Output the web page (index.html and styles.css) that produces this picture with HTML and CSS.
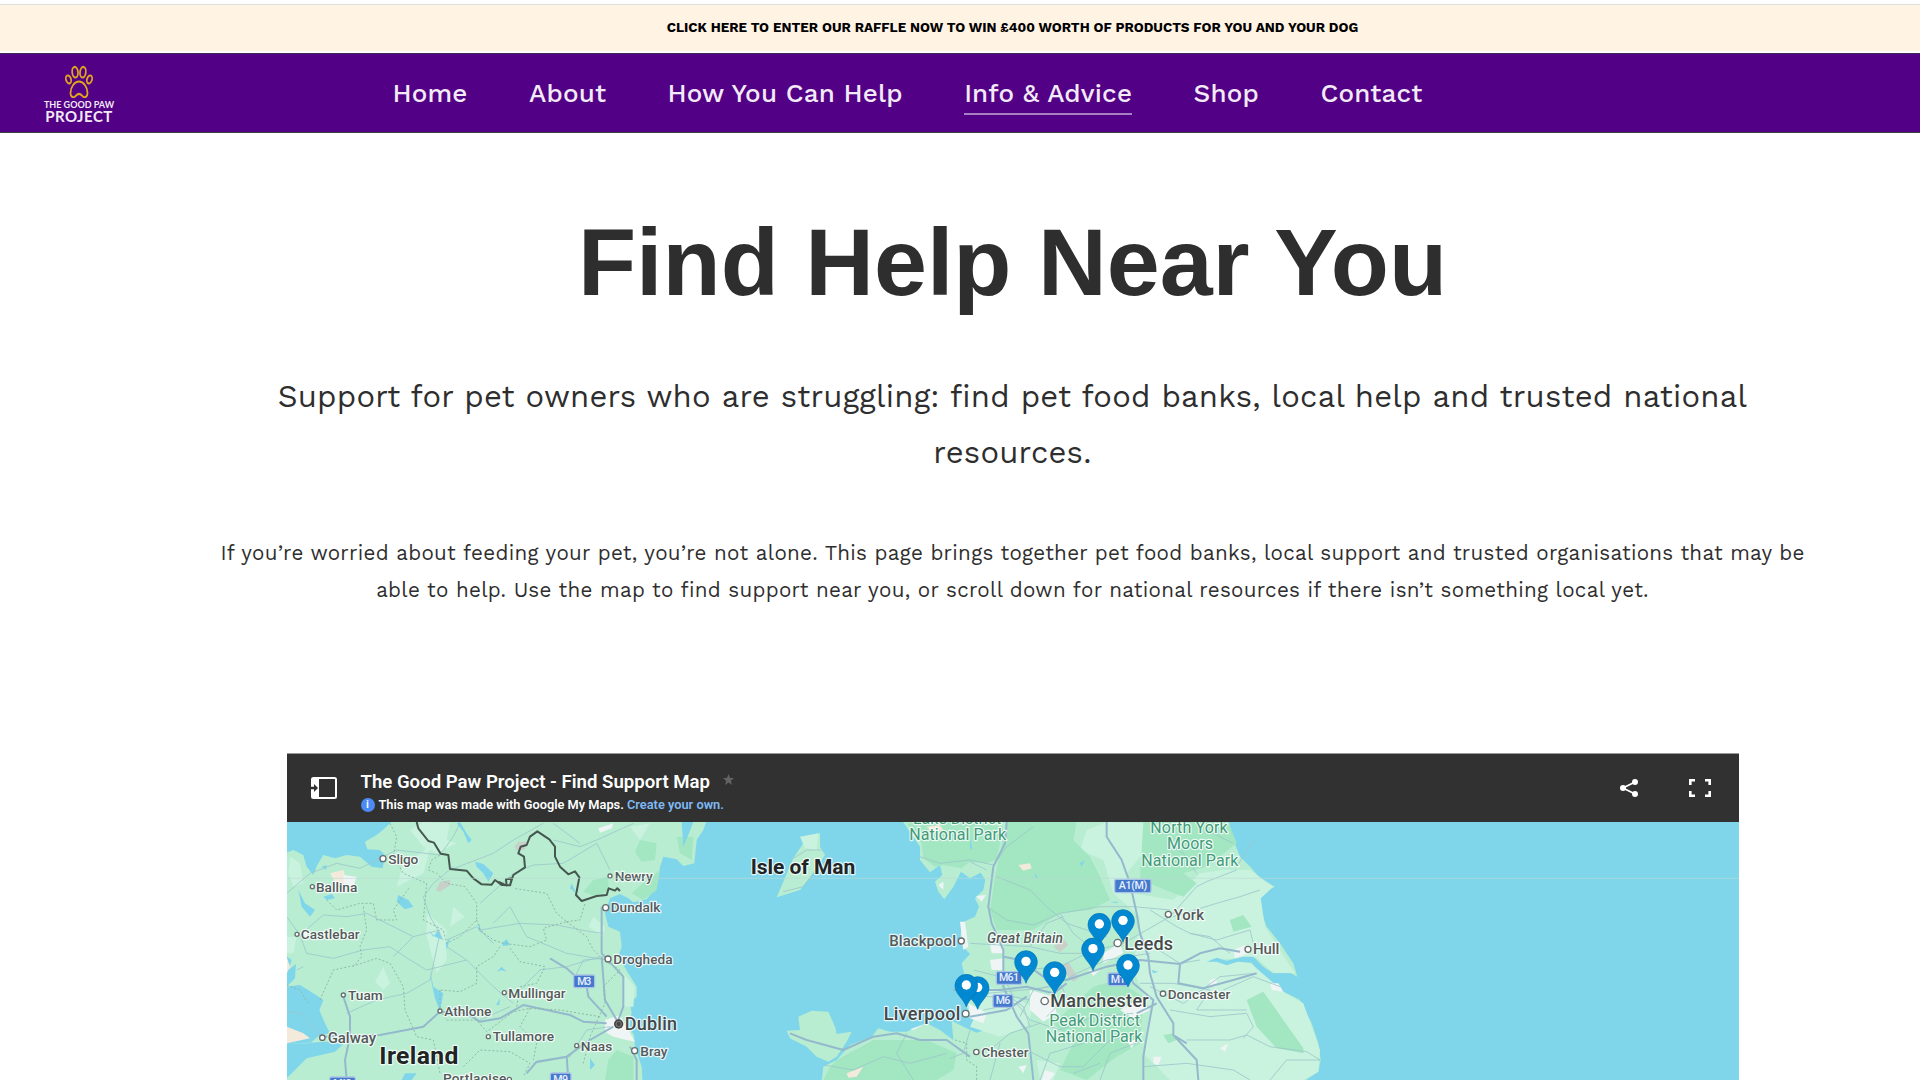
FILE: index.html
```
<!DOCTYPE html>
<html lang="en">
<head>
    <meta charset="UTF-8">
    <meta name="viewport" content="width=device-width, initial-scale=1.0">
    <title>Find Help Near You - The Good Paw Project</title>
    <link rel="stylesheet" href="styles.css">
</head>
<body>
    <div class="page">
        <a class="announcement">CLICK HERE TO ENTER OUR RAFFLE NOW TO WIN £400 WORTH OF PRODUCTS FOR YOU AND YOUR DOG</a>

        <header class="site-header">
            <a class="logo">
                <svg class="paw" viewBox="0 0 32 32" preserveAspectRatio="none">
                    <ellipse cx="11.5" cy="7" rx="3.3" ry="5.2" transform="rotate(-8 11.5 7)"/>
                    <ellipse cx="20.5" cy="7" rx="3.3" ry="5.2" transform="rotate(8 20.5 7)"/>
                    <ellipse cx="4" cy="14" rx="2.8" ry="4" transform="rotate(-24 4 14)"/>
                    <ellipse cx="28" cy="14" rx="2.8" ry="4" transform="rotate(24 28 14)"/>
                    <path d="M16 16C11 16 6.5 21 6.3 27C6 31 9.500 32 11.500 30.500C14 28.500 14.500 28 16 28C17.500 28 18 28.500 20.500 30.500C22.500 32 26 31 25.700 27C25.500 21 21 16 16 16Z"/>
                </svg>
                <span class="logo-top">THE GOOD PAW</span>
                <span class="logo-bottom">PROJECT</span>
            </a>
            <nav class="main-nav">
                <a>Home</a>
                <a>About</a>
                <a>How You Can Help</a>
                <a class="active">Info &amp; Advice</a>
                <a>Shop</a>
                <a>Contact</a>
            </nav>
        </header>

        <main>
            <h1>Find Help Near You</h1>
            <p class="lead">Support for pet owners who are struggling: find pet food banks, local help and trusted national<br>resources.</p>
            <p class="intro">If you’re worried about feeding your pet, you’re not alone. This page brings together pet food banks, local support and trusted organisations that may be<br>able to help. Use the map to find support near you, or scroll down for national resources if there isn’t something local yet.</p>

            <section class="map">
                <div class="map-header">
                    <svg class="panel-icon" viewBox="0 0 26 22">
                        <rect x="1" y="1" width="24" height="20" rx="1.500" fill="none" stroke="#fff" stroke-width="2"/>
                        <path d="M1 1H8V21H1Z" fill="#fff"/>
                        <path d="M0 9.800H3V7L7 11L3 15V12.200H0Z" fill="#303130"/>
                    </svg>
                    <div class="map-titles">
                        <div class="map-title">The Good Paw Project - Find Support Map <svg class="star" viewBox="0 0 12 12"><path d="M6 0L7.600 4.200L12 4.500L8.600 7.300L9.700 12L6 9.400L2.300 12L3.400 7.300L0 4.500L4.400 4.200Z"/></svg></div>
                        <div class="map-note"><span class="info">i</span><span>This map was made with Google My Maps. <a>Create your own.</a></span></div>
                    </div>
                    <svg class="share-icon" viewBox="0 0 18 18" fill="#fff">
                        <path d="M15 3L3 9L15 15" fill="none" stroke="#fff" stroke-width="1.800"/>
                        <circle cx="3" cy="9" r="3"/><circle cx="15" cy="3" r="3"/><circle cx="15" cy="15" r="3"/>
                    </svg>
                    <svg class="full-icon" viewBox="0 0 22 18" fill="none" stroke="#fff" stroke-width="2.600">
                        <path d="M1.300 6V1.300H6M16 1.300H20.700V6M20.700 12V16.700H16M6 16.700H1.300V12"/>
                    </svg>
                </div>

                <svg class="map-canvas" viewBox="287 822 1452 258">
                    <defs>
                        <path id="pin" d="M0 0C-7 -25 -34 -38 -34 -64A34 34 0 0 1 34 -64C34 -38 7 -25 0 0Z"/>
                    </defs>

                    <!-- Ireland -->
                    <g transform="translate(280 740) scale(.33333)">
                        <path class="land" d="M340 240L318 262L290 285L255 305L262 328L300 330L315 345L308 385L275 380L240 350L200 345L165 355L130 345L112 375L100 405L80 380L70 345L40 330L15 340V645L35 660L25 690L48 672L45 715L20 740L60 735L100 760L130 780L118 810L135 850L150 880L120 885L90 910L21 912L140 905L190 912L165 935L80 955L50 985L15 1020V1030H1088L1085 980L1065 920L1062 885L1045 860L1055 820L1050 790L1070 770L1070 740L1045 700L1015 650L1025 620L1020 575L985 560L975 520L990 475L1020 462L1045 475L1060 487L1100 478L1130 440L1140 380L1150 350L1190 358L1210 378L1243 370L1250 300L1270 270L1280 240Z"/>
                        <path class="light" d="M430 246L510 250L500 300L530 310L470 340L430 320L390 270ZM460 290L430 400L350 440L370 370L430 335ZM310 680L330 730L310 750L285 725ZM440 520L500 570L500 660L470 700L440 590ZM520 500L555 530L510 560ZM1050 260L1110 250L1080 300ZM940 530L975 560L970 590L925 560ZM1030 700L1065 740L1060 800L1030 800ZM30 350L60 370L70 430L40 440L25 400ZM20 590L50 590L40 640H20Z"/>
                        <path class="park" d="M1080 300L1130 310L1125 360L1085 365L1065 335ZM1190 290L1240 290L1235 360L1200 340ZM940 420L985 410L985 450L950 470L910 455ZM1100 420L1140 390L1130 450L1090 480L1055 460ZM1010 930L1060 950L1060 1020H975L985 960Z"/>
                        <path class="sand" d="M150 400L190 390L200 425L170 435ZM20 860L70 880L90 895L20 910ZM20 650L30 680L20 700Z"/>
                        <path class="town" d="M190 405L230 410L220 440L190 430ZM975 840L1020 825L1045 870L1065 905L1040 900L1000 890L975 875ZM955 265L1000 250L995 265L960 278ZM60 585L85 560L80 590Z"/>
                        <path class="grey" d="M468 450L480 425L510 420L512 435L480 455ZM702 320L715 305L740 305L735 330H710Z"/>
                        <path class="lake" d="M540 246L560 280L575 300L565 310L550 275L530 250ZM585 365L610 372L640 400L625 425L610 400L590 380ZM1205 246H1240L1225 285L1210 320ZM55 450L75 490L105 510L90 530L65 500ZM130 470L155 462L165 475L140 480ZM355 465L385 480L400 500L375 508L350 485ZM445 570L460 590L475 570L490 600L465 590ZM497 610L510 595L500 630ZM598 550L605 580L595 570ZM665 610L680 598L690 615L670 618ZM650 695L665 680L680 695L665 690ZM450 690L460 740L490 760L480 815L465 775L455 730ZM648 795L660 775L658 795ZM875 430L888 460L870 445ZM930 955L945 975L930 990ZM375 1000L410 1000L395 1020H365ZM20 760L75 770L105 800L65 800L25 780ZM125 380L140 375L138 390Z"/>
                        <path class="road" d="M20 460L90 400L170 370L240 385L300 355L350 330L480 345L520 290L540 250M510 390L640 340L700 300L790 250M600 490L700 400L760 375L850 370L950 310L990 390M820 300L900 320L950 300L1060 250M820 250L900 310M60 585L130 525L200 530L260 520L330 555L400 590L480 570M60 585L80 640L160 655L250 630L330 620L390 660L440 690L560 660M50 690L70 680M120 885L60 820L20 815M200 820L290 780L380 760L450 720L480 580L450 530L430 470L460 430L520 380M500 600L590 560L640 610L600 570L720 550L830 555L930 575L970 580M640 550L690 500L740 590L860 640L980 660M500 620L560 660L640 740L700 790M700 770L780 690L860 680L960 650M880 720L910 660L970 655M760 970L870 950L920 870L990 860M600 840L690 800M20 530L60 585M400 590L370 620L340 650"/>
                        <path class="road motorway" d="M190 770L210 830L210 890L195 960L200 1020M130 890L300 885L430 860L480 815L560 820L600 845L660 835L730 795L870 825L910 845L980 850M810 655L860 685L920 740L925 770L980 830M965 500L965 640L1030 710L1030 800L1015 840M1000 860L930 900L860 950L770 965L740 1000M860 950L865 1020M965 650L975 780L1010 840M1050 920L1070 960L1070 1020"/>
                        <path class="county" d="M330 250L350 290L340 350L370 400L440 430L430 540L490 570L500 610L540 590L590 540L590 490L555 440L500 430L470 400L445 390L455 360L490 340M590 540L600 570L640 600L670 610L750 620L800 600L790 565L860 545L830 520L800 460L700 445M860 545L900 540L915 490M860 545L920 590L940 630L970 660L1020 690L970 740L975 790L930 890L910 970M660 620L640 650L590 680L590 730L540 755L480 750M480 750L480 810L500 840L590 840L620 875L700 815L750 805L840 810L960 830M750 805L720 860L770 910L760 960M690 625L720 665L795 680L770 730L720 740L710 800M120 780L160 690L230 675L290 655L330 670L370 740L375 810L410 890L460 900L480 1000M140 480L170 510L240 490L280 490L290 540L350 540L340 510L390 440M250 500L260 570L240 620L245 650L220 680M20 735L60 750L85 790M550 980L600 930L690 935L750 970L730 1010"/>
                        <path class="border" d="M410 246L415 265L445 303L462 308L482 341L505 345L510 387L560 392L580 415L605 433L635 434L645 420L665 435L690 436L700 405L735 382L732 350L715 340L722 320L740 315L750 290L772 274L808 298L825 320L825 350L840 380L865 403L885 394L898 412L888 465L905 483L950 468L980 465L986 445L1005 452L1012 445L1020 453M655 425L680 437L678 418L695 415L690 438"/>

                        <g class="labels">
                            <g class="dots">
                                <circle cx="309" cy="356" r="9"/><circle cx="97" cy="440" r="6"/><circle cx="51" cy="583" r="6"/><circle cx="190" cy="765" r="6"/><circle cx="480" cy="813" r="6"/><circle cx="127" cy="893" r="8"/><circle cx="673" cy="758" r="6"/><circle cx="625" cy="890" r="6"/><circle cx="890" cy="917" r="6"/><circle cx="1064" cy="932" r="9"/><circle cx="984" cy="657" r="9"/><circle cx="977" cy="503" r="9"/><circle cx="990" cy="408" r="6"/>
                            </g>
                            <circle cx="1016" cy="852" r="14" fill="#444"/><circle cx="1016" cy="852" r="8" fill="none" stroke="#999" stroke-width="2"/>
                            <text x="325" y="372" textLength="90">Sligo</text>
                            <text x="108" y="455" textLength="124">Ballina</text>
                            <text x="62" y="598" textLength="177">Castlebar</text>
                            <text x="204" y="780" textLength="104">Tuam</text>
                            <text x="493" y="828" textLength="141">Athlone</text>
                            <text x="143" y="908" textLength="145" class="mid">Galway</text>
                            <text x="685" y="773" textLength="172">Mullingar</text>
                            <text x="638" y="904" textLength="184">Tullamore</text>
                            <text x="902" y="932" textLength="95">Naas</text>
                            <text x="1081" y="947" textLength="81">Bray</text>
                            <text x="1000" y="672" textLength="178">Drogheda</text>
                            <text x="992" y="517" textLength="149">Dundalk</text>
                            <text x="1004" y="424" textLength="114">Newry</text>
                            <text x="1034" y="871" textLength="157" class="city">Dublin</text>
                            <text x="489" y="1030" textLength="190">Portlaoise</text><circle cx="688" cy="1018" r="6" class="dot"/>
                            <text x="298" y="971" textLength="237" class="country">Ireland</text>
                        </g>
                        <g class="shield"><rect x="881" y="705" width="63" height="38" rx="5"/><text x="892" y="734" textLength="42">M3</text><rect x="149" y="1011" width="77" height="38" rx="5"/><text x="160" y="1040" textLength="55">M18</text><rect x="811" y="999" width="62" height="38" rx="5"/><text x="820" y="1028" textLength="44">M9</text></g>
                    </g>

                    <!-- Great Britain and the Isle of Man -->
                    <g transform="translate(740 810) scale(.33333)">
                        <path class="land" d="M485 30L520 80L540 110L540 150L570 187L600 165L607 195L585 215L595 245L613 268L640 230L663 185L690 205L722 188L736 210L730 240L705 265L717 290L705 320L665 338L660 400L690 432L665 460L672 490L650 530L685 600L700 630L750 655L710 668L670 650L635 632L640 690L600 660L560 640L500 665L450 665L415 655L395 680L330 705L290 750L250 770L245 815H1690L1735 785L1742 750L1735 700L1715 640L1680 570L1630 545L1590 515L1560 490L1535 458L1460 465L1430 448L1460 455L1510 440L1545 445L1570 470L1600 490L1650 488L1672 500L1660 460L1620 400L1580 350L1565 310L1562 265L1575 242L1605 230L1560 205L1535 175L1500 140L1480 90L1465 30Z"/>
                        <path class="land" d="M240 68L240 110L255 135L215 195L180 240L110 262L130 215L160 145L190 100ZM140 662L180 660L175 620L215 602L265 605L285 650L290 672L335 665L320 695L290 740L265 755L230 740L200 710L150 685Z"/>
                        <path class="light" d="M1100 36L1220 40L1210 130L1160 190L1180 250L1300 270L1380 190L1450 180L1530 180L1600 230L1562 265L1575 350L1665 490L1600 488L1545 440L1430 450L1530 458L1630 545L1690 580L1740 720L1735 785L1690 810H1290L1210 730L1230 600L1180 480L1200 320L1120 250L1090 150L1020 120L1040 60ZM180 80L235 70L230 120L195 115ZM750 530L880 590L860 650L780 680L690 650ZM890 750L960 760L940 810H900ZM440 765L490 760L510 790L450 795Z"/>
                        <path class="park" d="M500 40L700 36L790 50L770 150L740 160L690 155L665 175L640 170L610 165L585 170L550 145L545 100ZM800 36H1010L1000 90L1050 140L1080 200L1110 270L1050 300L960 310L880 360L770 360L750 300L765 200ZM1210 36L1465 36L1490 100L1400 170L1330 190L1370 220L1330 260L1200 210ZM1060 530L1130 510L1210 560L1200 700L1130 740L1040 810L960 780L1000 700L940 640ZM290 750L400 690L560 690L650 730L640 780L590 810H250L270 770ZM1520 570L1570 545L1690 715V730L1610 715L1550 650ZM1270 675L1300 670L1310 690L1285 700ZM1470 330L1510 315L1535 350L1480 365Z"/>
                        <path class="sand" d="M835 165L870 160L875 175L850 182ZM320 790L370 770L350 800L325 803ZM560 50L600 45L610 60L575 65Z"/>
                        <path class="grey" d="M940 410L970 385L985 405L960 427ZM970 465L985 455L1015 505L1000 515L980 495Z"/>
                        <path class="town" d="M660 335L675 335L685 410L670 420ZM595 225L610 215L610 240ZM708 258L738 255L725 275ZM750 405L790 400L790 430L755 430ZM870 540L940 560L950 610L910 635L870 600ZM685 580L740 610L730 640L690 625ZM1090 430L1140 400L1150 430L1090 460ZM1190 570L1230 600L1180 625L1140 600ZM1480 420L1515 405L1525 430L1485 445ZM1045 480L1080 480L1060 498ZM1590 520L1615 520L1630 545L1595 540ZM750 450L790 445V480H755ZM835 770L860 765L850 790ZM915 780L945 790L930 810H905ZM1240 740L1265 740L1255 765L1240 760ZM1440 715L1465 700L1455 725ZM1410 510L1430 505L1430 530L1405 530ZM560 640L510 658L520 660ZM1160 690L1190 690L1175 715Z"/>
                        <path class="lake" d="M690 80L697 120L690 115ZM1350 455L1400 455L1430 443L1460 452L1510 440L1540 440L1545 455L1510 450L1460 466L1430 455ZM1110 275L1135 275L1130 280ZM885 190L895 205L885 200ZM1020 160L1035 150L1025 170ZM1235 480L1255 485L1240 490Z"/>
                        <path class="road" d="M160 145L200 120L245 120M130 245L190 230L220 190M540 140L600 160L690 150L760 165L800 110L880 50M690 155L740 180M770 200L870 240L920 290L980 340L1100 380M740 290L800 330L880 345L960 310L1080 290L1180 290L1290 300M960 310L1000 370L1060 420M690 400L780 405L870 410L960 430L1030 430L1150 400L1220 360L1290 320L1370 230L1400 215L1490 180M870 410L920 340L970 320M1300 320L1430 280L1500 260L1560 240M1230 300L1310 350L1350 370L1410 380L1470 430M1350 370L1430 390L1530 360L1545 420M1240 410L1320 460L1380 450M1450 540L1540 500L1620 530M1200 520L1300 520L1410 540L1370 600L1520 600M1290 600L1410 620L1520 610M1340 690L1470 690L1520 675L1590 710L1700 725L1740 750M1590 810L1640 750L1740 750M1210 770L1340 760L1480 780L1530 810M1520 610L1540 650L1510 685M700 480L780 500L850 480L960 470L1040 430M680 540L740 550L850 540L940 530L1010 490L1100 450L1230 430M730 600L830 580L870 630L960 660L1060 620L1180 610M840 620L880 540L960 520L980 560L920 620M790 500L820 560L870 570M870 650L850 590L810 560L740 560M700 730L750 720L810 670L900 640M690 660L670 730L630 745M780 700L750 810M860 720L960 770L1030 770L1110 690L1200 670M250 765L340 780L430 740L510 760L620 730M500 670L470 730L520 810M1080 810L1110 730L1210 690M900 810L930 730L1030 700M1230 530L1330 580L1440 500L1545 490M1480 100L1400 60M1370 190L1330 130L1280 100M1000 790L1080 760M1540 90L1490 170"/>
                        <path class="road motorway" d="M800 36L795 100L760 170L745 290L755 340L790 420L790 530L830 620L865 670L880 810M1100 36L1100 80L1145 150L1170 220L1190 310L1200 370L1225 440L1230 490L1250 560L1300 640L1300 675L1370 750L1375 810M150 670L200 690L310 720L400 680L470 670L540 690L620 690L690 740M790 440L840 450L910 500L980 510L1100 470L1200 450L1320 462L1380 430L1440 415L1500 425M640 540L780 540L860 530L940 550L980 520M690 620L800 600L860 560M1320 462L1315 520L1390 535L1480 510L1550 490M1150 450L1180 520L1240 570L1220 680L1210 740L1210 810M1190 610L1250 580M1300 675L1340 700"/>
                        <path class="county" d="M645 690L680 700L680 750L710 770V810"/>

                        <g class="labels">
                            <text x="32" y="192" textLength="314" class="country small">Isle of Man</text>
                            <g class="green">
                                <text x="519" y="41" textLength="265">Lake District</text>
                                <text x="508" y="90" textLength="290">National Park</text>
                                <text x="1231" y="69" textLength="232">North York</text>
                                <text x="1281" y="118" textLength="138">Moors</text>
                                <text x="1204" y="167" textLength="291">National Park</text>
                                <text x="928" y="648" textLength="272">Peak District</text>
                                <text x="917" y="697" textLength="290">National Park</text>
                            </g>
                            <g class="dots">
                                <circle cx="664" cy="393" r="9"/><circle cx="677" cy="611" r="10"/><circle cx="709" cy="726" r="8"/><circle cx="914" cy="573" r="11"/><circle cx="1133" cy="399" r="11"/><circle cx="1285" cy="313" r="9"/><circle cx="1269" cy="551" r="8"/><circle cx="1524" cy="418" r="9"/>
                            </g>
                            <text x="448" y="409" textLength="200" class="mid">Blackpool</text>
                            <text x="741" y="398" textLength="228" class="italic">Great Britain</text>
                            <text x="431" y="629" textLength="230" class="city">Liverpool</text>
                            <text x="724" y="740" textLength="142">Chester</text>
                            <text x="931" y="591" textLength="295" class="city">Manchester</text>
                            <text x="1153" y="420" textLength="146" class="city">Leeds</text>
                            <text x="1301" y="329" textLength="91" class="mid">York</text>
                            <text x="1283" y="567" textLength="188">Doncaster</text>
                            <text x="1539" y="433" textLength="79" class="mid">Hull</text>
                        </g>
                        <g class="shield"><rect x="1124" y="208" width="109" height="40" rx="5"/><text x="1136" y="238" textLength="86">A1(M)</text><rect x="769" y="485" width="76" height="38" rx="5"/><text x="777" y="514" textLength="60">M61</text><rect x="759" y="554" width="60" height="38" rx="5"/><text x="767" y="583" textLength="44">M6</text><rect x="1104" y="489" width="66" height="38" rx="5"/><text x="1112" y="518" textLength="44">M1</text></g>
                        <path d="M-1361 205H3000" stroke="#bcd8d5" stroke-opacity=".6" stroke-width="3"/>

                        <g class="pins">
                            <g transform="translate(713 598)"><use href="#pin"/><circle cy="-66" r="14"/></g>
                            <g transform="translate(679 591)"><use href="#pin"/><circle cy="-66" r="14"/></g>
                            <g transform="translate(858 520)"><use href="#pin"/><circle cy="-66" r="14"/></g>
                            <g transform="translate(944 553)"><use href="#pin"/><circle cy="-66" r="14"/></g>
                            <g transform="translate(1078 408)"><use href="#pin"/><circle cy="-66" r="14"/></g>
                            <g transform="translate(1149 397)"><use href="#pin"/><circle cy="-66" r="14"/></g>
                            <g transform="translate(1059 482)"><use href="#pin"/><circle cy="-66" r="14"/></g>
                            <g transform="translate(1164 531)"><use href="#pin"/><circle cy="-66" r="14"/></g>
                        </g>
                    </g>
                </svg>
            </section>
        </main>
    </div>
</body>
</html>
```
FILE: styles.css
```
body {
    margin: 0;
    background: #fff;
    color: #2e2e2e;
    font-family: "Work Sans", Inter, sans-serif;
}

.page {
    height: 1080px;
    overflow: hidden;
    padding-top: 4px;
    box-sizing: border-box;
}

.announcement {
    display: block;
    height: 49px;
    box-sizing: border-box;
    padding-left: 105px;
    border-top: 1px solid #dde0dd;
    border-bottom: 2px solid #fff;
    background: #fff3e4;
    color: #000;
    font-size: 13.5px;
    font-weight: 700;
    line-height: 45px;
    text-align: center;
}

.site-header {
    display: flex;
    height: 80px;
    box-sizing: border-box;
    border-top: 1px solid #3d2a55;
    border-bottom: 1px solid #3d3d3d;
    background: #520085;
    color: #f2eaf6;
}

.logo {
    display: flex;
    flex-direction: column;
    align-items: center;
    width: 70px;
    margin-left: 44px;
    padding-top: 11px;
    font-family: Lato, sans-serif;
}

.paw {
    width: 28px;
    height: 33px;
    fill: none;
    stroke: #e2a51e;
    stroke-width: 2;
}

.logo-top {
    margin-top: 2px;
    font-size: 9px;
    font-weight: 700;
    line-height: 9px;
    white-space: nowrap;
}

.logo-bottom {
    font-size: 15px;
    font-weight: 700;
    line-height: 14px;
    letter-spacing: 0.5px;
}

.main-nav {
    display: flex;
    gap: 61.5px;
    margin-left: 278.5px;
    padding-top: 20px;
}

.main-nav a {
    height: 39px;
    box-sizing: border-box;
    font-size: 26px;
    font-weight: 500;
    line-height: 38px;
    letter-spacing: 0.17px;
    white-space: nowrap;
}

.main-nav .active {
    height: 41px;
    border-bottom: 2px solid #a87fc2;
}

main {
    padding-left: 105px;
}

h1 {
    margin: 75px 0 0;
    font-family: "Liberation Sans", Arial, sans-serif;
    font-size: 95.2px;
    font-weight: 700;
    line-height: 109px;
    text-align: center;
}

.lead,
.intro {
    margin: 0;
    text-align: center;
    white-space: nowrap;
}

.lead {
    margin-top: 52px;
    font-size: 31px;
    line-height: 56px;
    letter-spacing: 0.22px;
}

.intro {
    margin-top: 54px;
    font-size: 20.6px;
    line-height: 37px;
    letter-spacing: 0.3px;
}

.map {
    width: 1452px;
    margin: 144px auto 0;
    font-family: Roboto, sans-serif;
}

.map-header {
    display: flex;
    align-items: center;
    height: 69px;
    box-sizing: border-box;
    padding: 0 28px 0 24px;
    border-top: 1px solid #999;
    background: #303130;
    color: #fff;
}

.panel-icon {
    width: 26px;
    height: 22px;
}

.map-titles {
    flex: 1;
    padding-top: 9px;
    padding-left: 24px;
}

.map-title {
    font-size: 18.6px;
    font-weight: 600;
    line-height: 24px;
}

.star {
    width: 11px;
    height: 11px;
    margin-left: 8px;
    fill: #626362;
    vertical-align: 3px;
}

.map-note {
    display: flex;
    align-items: center;
    gap: 4px;
    font-size: 12.8px;
    font-weight: 600;
    line-height: 22px;
}

.map-note a {
    color: #7fb9f5;
}

.info {
    width: 14px;
    height: 14px;
    border-radius: 50%;
    background: #4c8bf5;
    font-size: 11px;
    line-height: 14px;
    text-align: center;
}

.share-icon {
    width: 18px;
    height: 18px;
    margin-right: 51px;
}

.full-icon {
    width: 22px;
    height: 18px;
}

.map-canvas {
    display: block;
    width: 1452px;
    height: 258px;
    background: #7fd6ea;
}

.land { fill: #b8edd2; }
.light { fill: #c9f2df; }
.park { fill: #a3e6c2; }
.sand { fill: #f3eadb; }
.town { fill: #eff4f4; }
.grey { fill: #c8d0ca; }
.lake { fill: #7fd6ea; }

.road {
    fill: none;
    stroke: #9cc6ca;
    stroke-width: 2.5;
    stroke-linejoin: round;
}

.motorway {
    stroke: #94b9cc;
    stroke-width: 6;
}

.county {
    fill: none;
    stroke: #8fb8a3;
    stroke-width: 3;
    stroke-dasharray: 6 6;
}

.border {
    fill: none;
    stroke: #45574e;
    stroke-width: 6;
    stroke-linejoin: round;
}

.labels text {
    fill: #545a5a;
    stroke: #fff;
    stroke-opacity: 0.8;
    stroke-width: 7;
    stroke-linejoin: round;
    paint-order: stroke;
    font-size: 41px;
    font-weight: 500;
}

.labels .mid {
    font-size: 45px;
}

.labels .city {
    fill: #444848;
    font-size: 54px;
}

.labels .country {
    fill: #202424;
    font-size: 74px;
    font-weight: 700;
}

.labels .small {
    font-size: 63px;
}

.labels .italic {
    font-style: italic;
}

.labels .green text {
    fill: #429b7a;
    font-size: 48px;
    font-weight: 400;
}

.dots circle,
.dot {
    fill: #fff;
    stroke: #666d6d;
    stroke-width: 4;
}

.shield rect {
    fill: #4479cc;
    stroke: #a9c4e6;
    stroke-width: 4;
}

.shield text {
    fill: #e8f0ff;
    font-size: 32px;
    font-weight: 500;
}

.pins use {
    fill: #0288d1;
    stroke: #0277b7;
    stroke-width: 2;
}

.pins circle {
    fill: #fff;
}
```
